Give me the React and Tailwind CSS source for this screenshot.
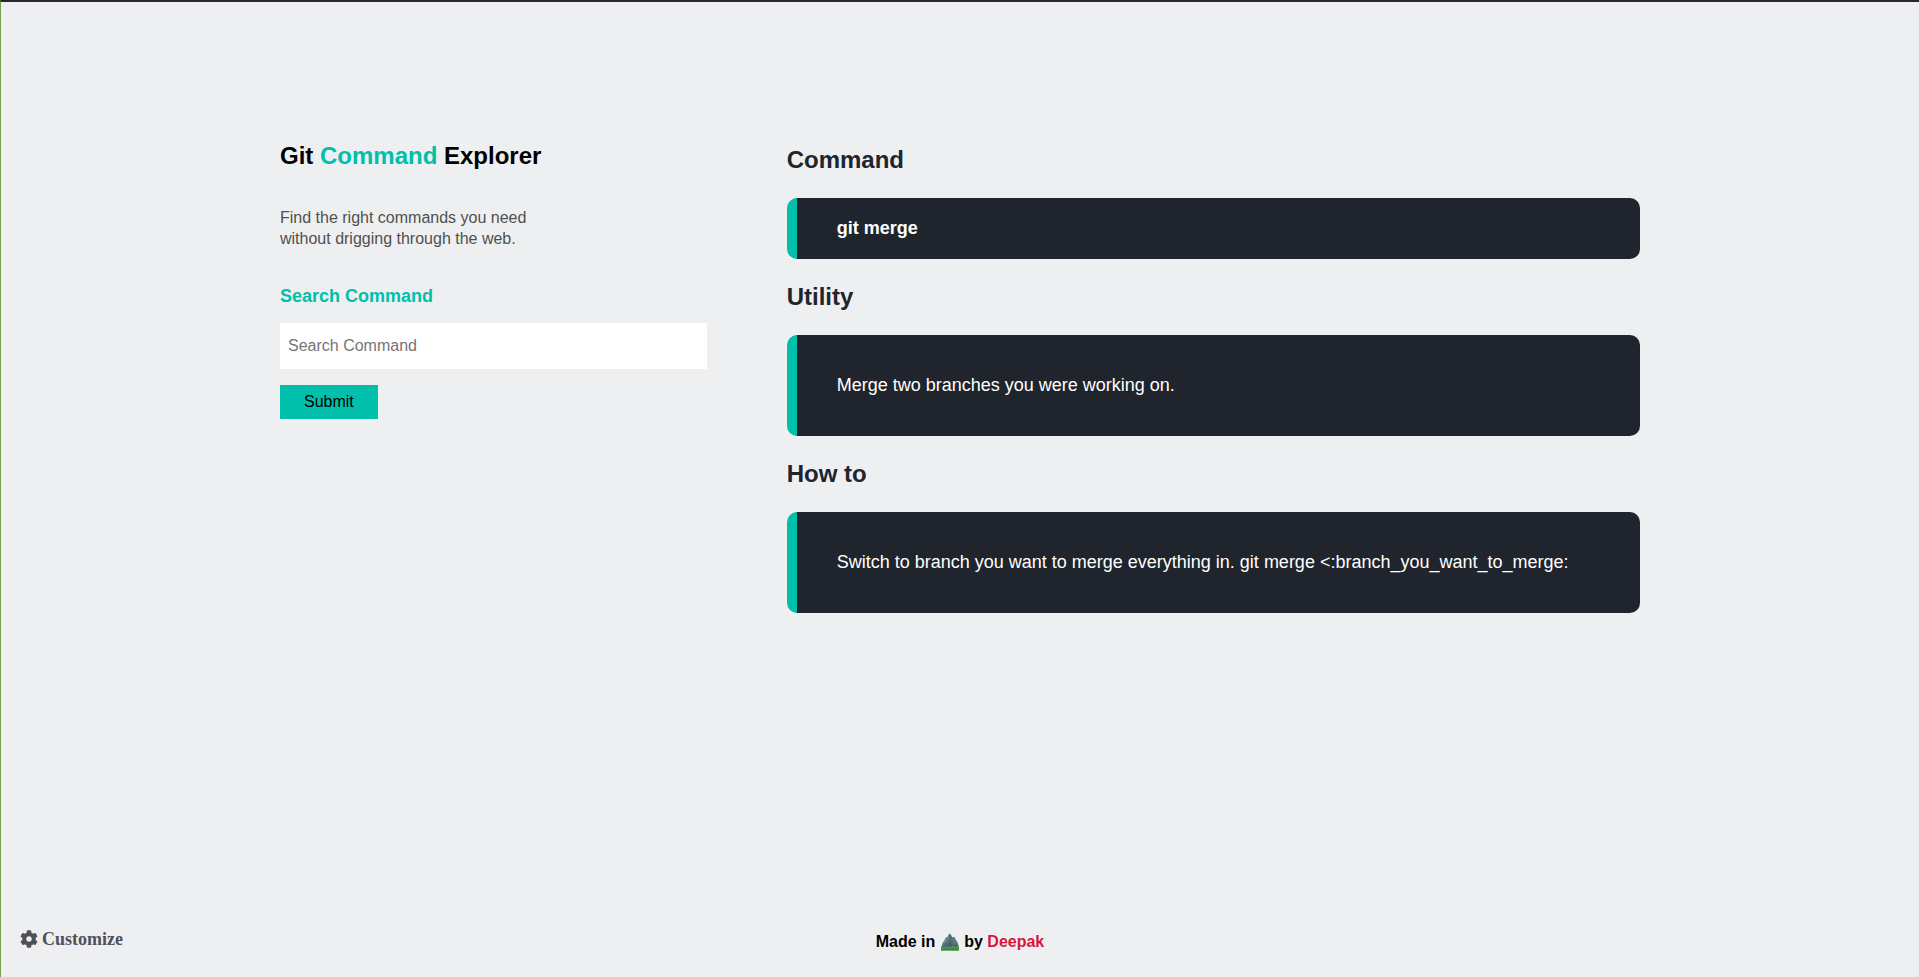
import { FaCog } from "react-icons/fa";

const results = [
  { title: "Command", text: "git merge", box: "py-5 font-bold" },
  { title: "Utility", text: "Merge two branches you were working on.", box: "py-10" },
  {
    title: "How to",
    text: "Switch to branch you want to merge everything in. git merge <:branch_you_want_to_merge:",
    box: "py-10",
  },
];

function Mountain() {
  return (
    <svg viewBox="0 0 18 18" className="mx-px inline-block h-[18px] w-[18px]" role="img" aria-label="Mountain">
      <path d="M0 13.2 Q4 11.6 9 12 T18 12.6 V17.5 H0 Z" fill="#43a047" />
      <path d="M0 15.6 L6 14.8 L18 15.4 V17.5 H0 Z" fill="#388e3c" />
      <path d="M0.8 13 L1.8 9.8 L3.6 7.6 L4.6 4.8 L6.6 3.8 L8.4 0.4 L9.8 1.6 L11.4 4.6 L13.4 3.8 L15 7.2 L16.6 9.6 L17.4 12.8 L14.6 14 L12 13.2 L9 14.2 L5.6 13.4 L3.4 14 Z" fill="#546e7a" />
      <path d="M8.4 0.6 L7.8 4.8 L6.2 7.6 L4.6 9.6 L2.4 10.6 L2.6 9.2 L4.6 5.2 L6.6 4.2 Z" fill="#708893" />
      <path d="M9.2 8 L10.4 10.4 L12.2 12.6 L9.4 13.8 L7 12.8 L8 10.4 Z" fill="#465c67" />
      <path d="M13.3 4.2 L13.2 7 L15 9.8 L14.2 11 L12.6 9 L12 6.4 Z" fill="#68818d" />
      <path d="M3.2 13.6 L5 11.6 L6.2 13.2 Z M13 13.2 L15 11.4 L16 13 Z" fill="#465c67" />
    </svg>
  );
}

export default function App() {
  return (
    <div className="flex min-h-screen flex-col border-t-2 border-l border-t-[#2a272a] border-l-[#78a050] bg-[#eeeff1] font-['Liberation_Sans',Arial,sans-serif] text-black">
      <main className="mx-auto grid w-full max-w-[1360px] flex-1 grid-cols-[1fr_2fr] content-start gap-20 pt-35">
        <section>
          <h1 className="text-2xl leading-7 font-bold">
            Git <span className="text-[#00bfab]">Command</span> Explorer
          </h1>
          <p className="mt-[37px] text-base leading-[21px] text-[#505050]">
            Find the right commands you need
            <br />
            without drigging through the web.
          </p>
          <form className="mt-[37px]" onSubmit={(e) => e.preventDefault()}>
            <label htmlFor="search" className="block text-lg leading-[21px] font-bold text-[#00bfab]">
              Search Command
            </label>
            <input
              id="search"
              type="text"
              placeholder="Search Command"
              className="mt-4 block h-[46px] w-full bg-white px-2 text-base outline-none placeholder:text-[#757575]"
            />
            <button type="submit" className="mt-4 h-[34px] bg-[#00bfab] px-6 text-base leading-[18px]">
              Submit
            </button>
          </form>
        </section>
        <section className="flex flex-col gap-6 pt-1 text-[#20242d]">
          {results.map((r) => (
            <div key={r.title}>
              <h2 className="text-2xl leading-7 font-bold">{r.title}</h2>
              <p
                className={`mt-6 rounded-[10px] border-l-10 border-[#00bfab] bg-[#20242d] px-10 text-lg leading-[21px] text-white ${r.box}`}
              >
                {r.text}
              </p>
            </div>
          ))}
        </section>
      </main>
      <footer className="grid grid-cols-3 items-start px-[19px] pb-5">
        <button
          type="button"
          className="flex items-center gap-1 justify-self-start font-['Liberation_Serif','Times_New_Roman',serif] text-lg leading-6 font-bold text-[#50505a]"
        >
          <FaCog size={18} />
          Customize
        </button>
        <p className="flex items-center justify-center text-base leading-[30px] font-bold whitespace-pre">
          Made in <Mountain /> by{" "}
          <a href="#deepak" className="text-[#dc143c]">
            Deepak
          </a>
        </p>
      </footer>
    </div>
  );
}
